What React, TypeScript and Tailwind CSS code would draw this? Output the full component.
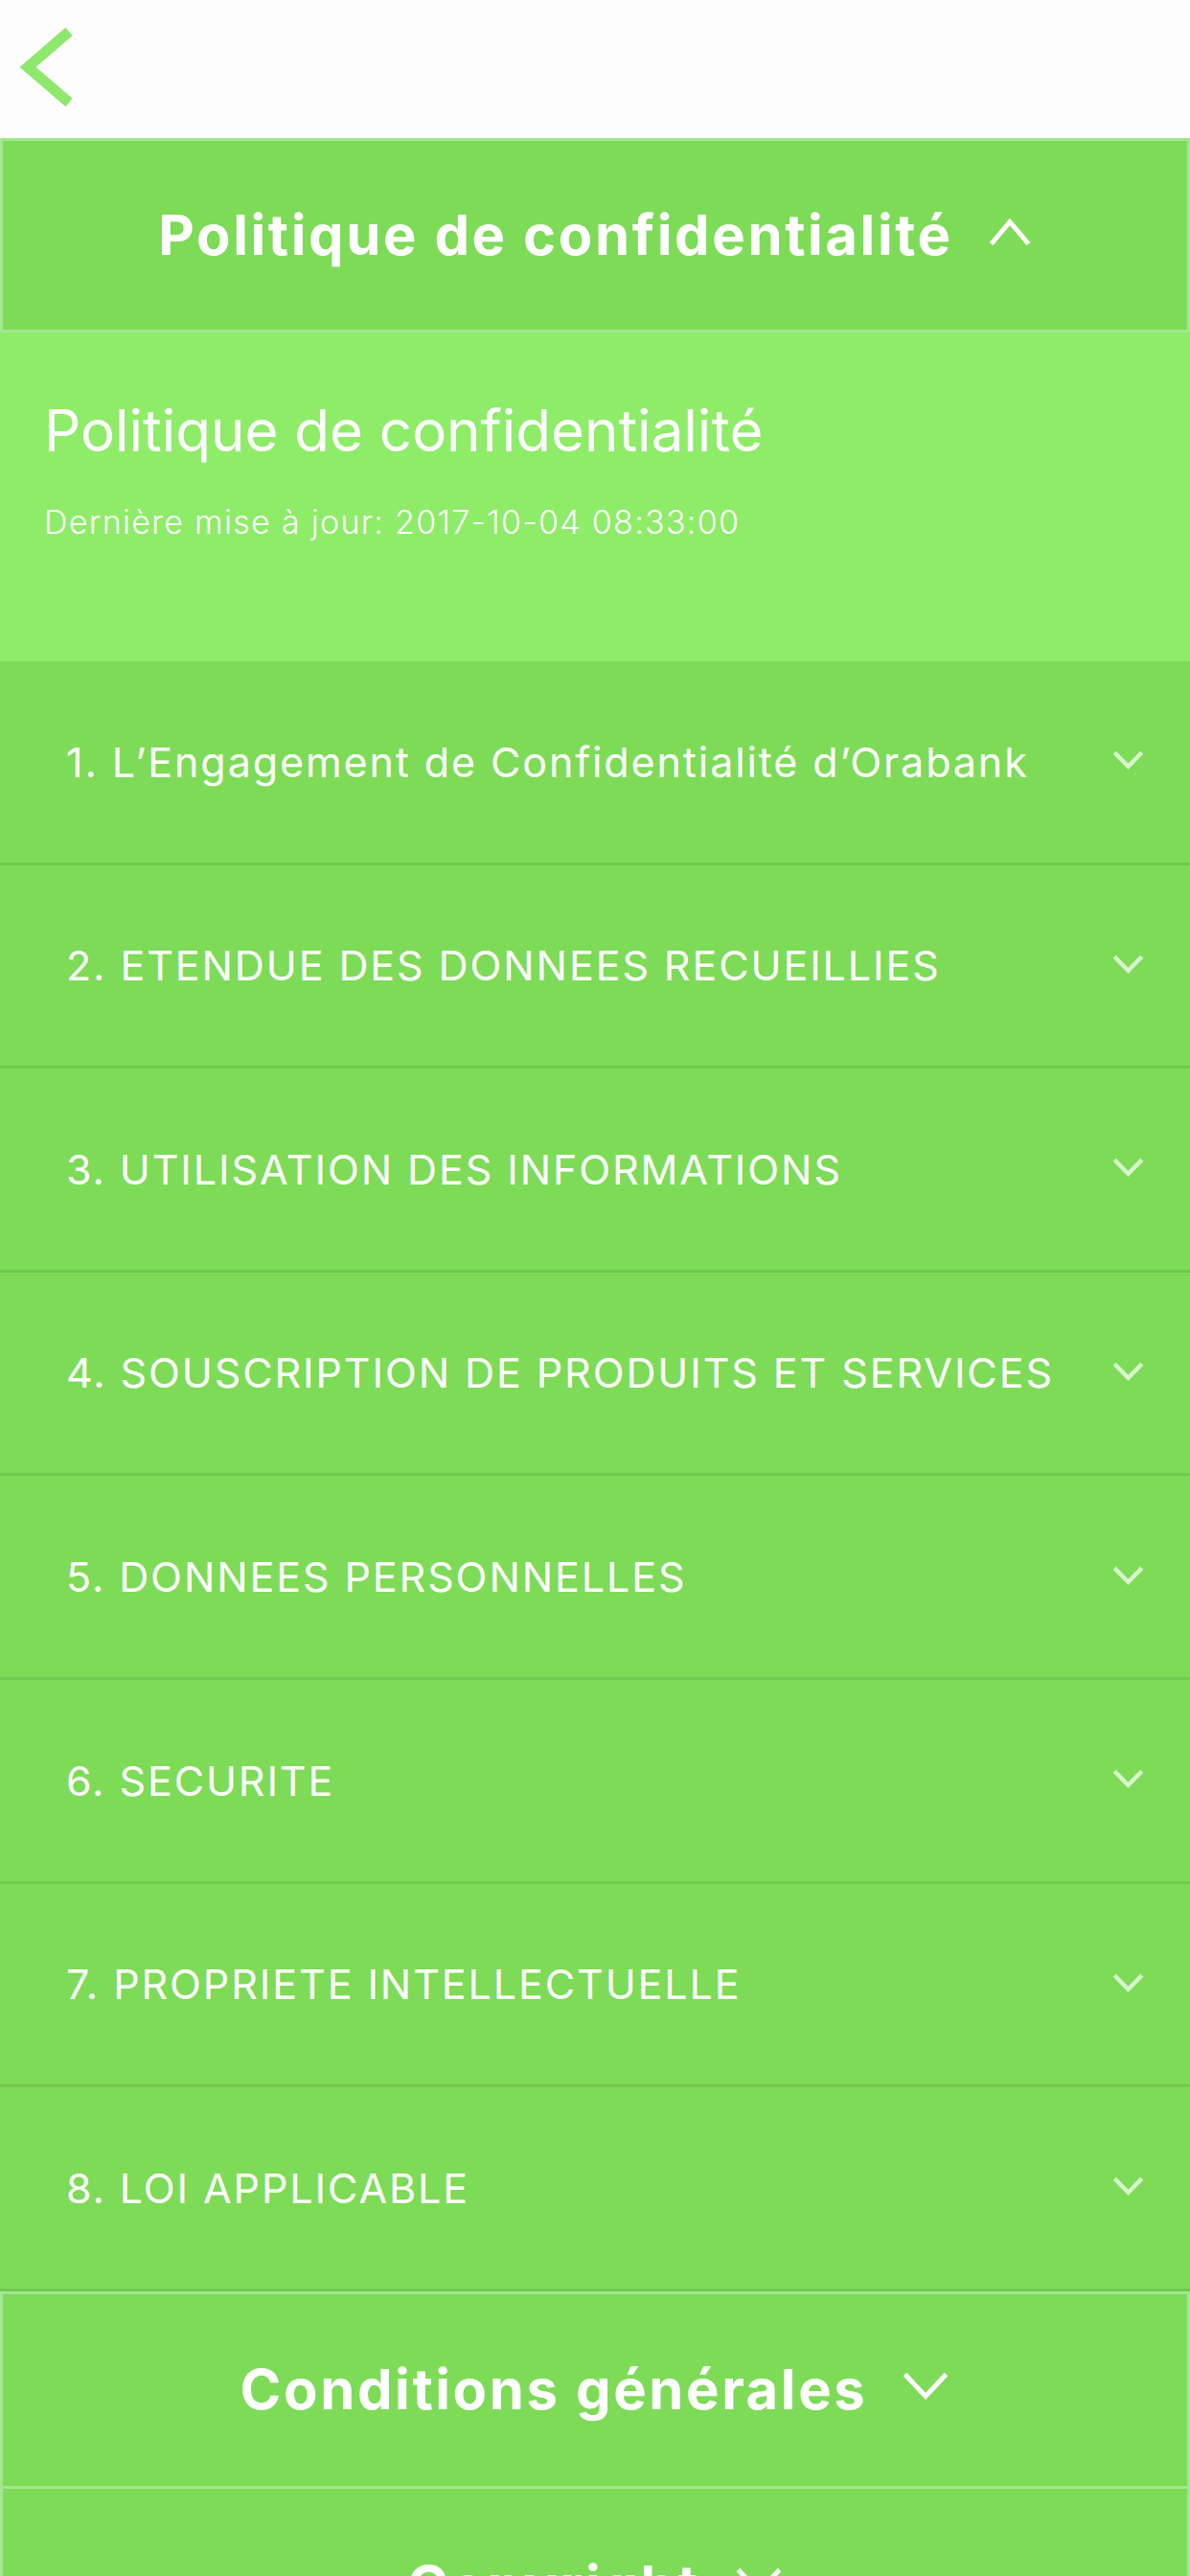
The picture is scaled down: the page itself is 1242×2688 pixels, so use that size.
const items = [
  '1. L\u2019Engagement de Confidentialité d\u2019Orabank',
  '2. ETENDUE DES DONNEES RECUEILLIES',
  '3. UTILISATION DES INFORMATIONS',
  '4. SOUSCRIPTION DE PRODUITS ET SERVICES',
  '5. DONNEES PERSONNELLES',
  '6. SECURITE',
  '7. PROPRIETE INTELLECTUELLE',
  '8. LOI APPLICABLE',
];

const font = { fontFamily: 'Inter, "Open Sans", "Liberation Sans", sans-serif' };

function Chevron({ up, w, h, sw, className }: { up?: boolean; w: number; h: number; sw: number; className?: string }) {
  const p = sw / 2 + 1;
  const pts = up
    ? `${p},${h - p} ${w / 2},${p} ${w - p},${h - p}`
    : `${p},${p} ${w / 2},${h - p} ${w - p},${p}`;
  return (
    <svg width={w} height={h} viewBox={`0 0 ${w} ${h}`} className={className}>
      <polyline points={pts} fill="none" stroke="currentColor" strokeWidth={sw} />
    </svg>
  );
}

export default function App() {
  return (
    <div className="w-[1242px] min-h-[2688px] bg-[#7ddb57] text-white" style={font}>
      {/* top bar */}
      <div className="h-[144px] bg-[#fdfdfd] flex items-start">
        <button className="mt-[28px] ml-[20px] w-[58px] h-[84px]">
          <svg width="58" height="84" viewBox="0 0 58 84">
            <polyline points="52,5 9,42 52,79" fill="none" stroke="#8de86b" strokeWidth="11" />
          </svg>
        </button>
      </div>

      {/* section header */}
      <div className="h-[203px] border-[3px] border-[#a3e690] bg-[#7ddb57] flex items-center justify-center gap-[36px]">
        <span className="text-[58px] font-bold tracking-[2.6px]">Politique de confidentialité</span>
        <Chevron up w={46} h={30} sw={5} className="mt-[-6px]" />
      </div>

      {/* intro */}
      <div className="h-[343px] bg-[#8eec69] pl-[46px] pt-[66px]">
        <h1 className="text-[60px] font-normal leading-[72px]">Politique de confidentialité</h1>
        <p className="mt-[40px] text-[34px] font-light tracking-[1.3px] leading-[40px]">Dernière mise à jour: 2017-10-04 08:33:00</p>
      </div>

      {/* articles */}
      <div>
        {items.map((t) => (
          <div
            key={t}
            className="h-[212.6px] border-b-[3px] border-[#72c94e] flex items-center justify-between pl-[69px] pr-[47px]"
          >
            <span className="text-[43px] font-normal tracking-[1.9px]">{t}</span>
            <Chevron w={35} h={21} sw={4.5} className="text-white/70 mt-[-4px]" />
          </div>
        ))}
      </div>

      {/* other sections */}
      <div className="h-[206px] border-[3px] border-[#a3e690] flex items-center justify-center gap-[36px]">
        <span className="text-[58px] font-bold tracking-[2.6px]">Conditions générales</span>
        <Chevron w={50} h={30} sw={5} className="mt-[-10px]" />
      </div>
      <div className="h-[206px] border-[3px] border-t-0 border-[#a3e690] flex items-center justify-center gap-[36px]">
        <span className="text-[58px] font-bold tracking-[2.6px]">Copyright</span>
        <Chevron w={50} h={30} sw={5} className="mt-[-10px]" />
      </div>
    </div>
  );
}
